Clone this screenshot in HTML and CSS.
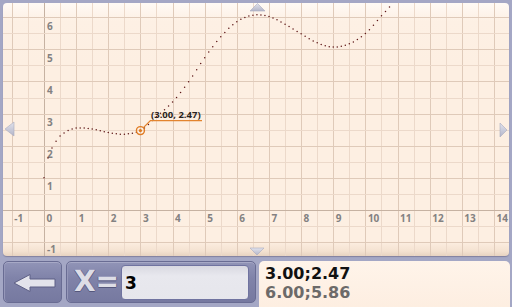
FILE: index.html
```html
<!DOCTYPE html>
<html lang="en">
  <head>
    <meta charset="UTF-8" />
    <meta name="viewport" content="width=device-width, initial-scale=1" />
    <title>Graph</title>
    <link rel="stylesheet" href="styles.css">
  </head>
  <body>
    <div class="screen">
      <!-- ===== GRAPH ===== -->
      <div class="graph">
        <svg id="plot" viewBox="3 3 506 253" width="506" height="253">
          <defs>
            <linearGradient id="navFill" x1="0" y1="0" x2="0" y2="1">
              <stop offset="0" stop-color="#e2e3ec"/>
              <stop offset="1" stop-color="#b3b5c9"/>
            </linearGradient>
          </defs>
          <g id="grid"></g>
          <g id="labels"></g>
          <g id="curve"></g>
          <g id="trace"></g>
          <!-- pan arrows -->
          <g class="nav">
            <polygon points="250,11 257.5,3.5 265,11"/>
            <polygon points="250,248 264,248 257,255"/>
            <polygon points="14,122 14,136 5,129"/>
            <polygon points="500,123 500,137 507,130"/>
          </g>
        </svg>
      </div>

      <!-- ===== INPUT BAR ===== -->
      <div class="bar">
        <button class="back-btn" aria-label="back">
          <svg viewBox="0 0 59 42"><path d="M10 21 L26 12.5 V17 H51 V25 H26 V29.5 Z"/></svg>
        </button>
        <div class="entry">
          <span class="x-label">X=</span>
          <div class="x-input">3</div>
        </div>
        <div class="results">
          <div class="res res-cur">3.00;2.47</div>
          <div class="res res-prev">6.00;5.86</div>
        </div>
      </div>
    </div>

    <script src="plot.js"></script>
  </body>
</html>
```

FILE: styles.css
```css
:root{
  --c-bg:#a4a7c5;
  --c-paper:#fdefe2;
  --c-btn:#8083a9;
  --c-btn-edge:#696c93;
  --c-label:#838181;
}
*,*::before,*::after{box-sizing:border-box;margin:0;padding:0}
html,body{width:512px;height:307px;overflow:hidden;background:var(--c-bg);font-family:"DejaVu Sans",sans-serif}

.screen{display:flex;flex-direction:column;height:307px;padding:3px 0 0 3px}

/* ===== GRAPH ===== */
.graph{width:506px;height:253px;border-radius:4px;overflow:hidden;
  background:linear-gradient(to bottom,#fffaf5 0,#fdf0e4 18px,var(--c-paper) 60px,var(--c-paper) 238px,#f4e2d1 248px,#e7d3c1 253px);
  box-shadow:0 1px 1px rgba(70,60,90,.35)}
#plot{display:block}
#plot .minor{stroke:#ecd9ca;stroke-width:1}
#plot .major{stroke:#dfcab9;stroke-width:1}
#plot .axis{stroke:#c6b2a2;stroke-width:1}
#plot .lbl{font-family:"Open Sans",sans-serif;font-weight:700;font-size:10px;fill:var(--c-label)}
#plot .dot{fill:#5e1717}
#plot .ring{fill:none;stroke:#e07b22;stroke-width:1.4}
#plot .ring-dot{fill:#e07b22}
#plot .lead{fill:none;stroke:#e3842f;stroke-width:1.3}
#plot .tip{font-family:"Open Sans",sans-serif;font-weight:700;font-size:9.5px;fill:#2a2420}
#plot .nav polygon{fill:url(#navFill);stroke:#a9abbf;stroke-width:.6}

/* ===== INPUT BAR ===== */
.bar{display:flex;align-items:flex-start;gap:4px;margin-top:5px;height:46px}

.back-btn{width:59px;height:42px;flex:none;border:1px solid var(--c-btn-edge);border-radius:5px;
  background:linear-gradient(to bottom,#9194b7,var(--c-btn) 40%,#7679a0);
  box-shadow:inset 0 1px 0 #a7a9c6,inset 1px 0 0 #9597b9;display:grid;place-items:center;cursor:pointer}
.back-btn svg{width:59px;height:42px;display:block}
.back-btn path{fill:#e3e3eb;stroke:#5d5f85;stroke-width:1}

.entry{width:190px;height:42px;flex:none;display:flex;align-items:center;padding:0 6px 0 7px;
  border:1px solid var(--c-btn-edge);border-radius:5px;
  background:linear-gradient(to bottom,#9194b7,var(--c-btn) 40%,#7679a0);
  box-shadow:inset 0 1px 0 #a7a9c6,inset 1px 0 0 #9597b9}
.x-label{width:47px;font-size:28px;font-weight:bold;line-height:1;color:#dddde6;
  text-shadow:0 1px 0 #55577c,1px 0 0 #6a6c92,-1px 0 0 #6a6c92,0 -1px 0 #9a9cbc}
.x-input{flex:1;height:35px;display:flex;align-items:center;padding:2px 0 0 3px;
  background:linear-gradient(to bottom,#d9d9e1,#e8e8ee 30%,#e6e6ec);border:1px solid #7073a0;border-radius:4px;
  font-size:17px;font-weight:bold;color:#000}

.results{flex:none;width:251px;height:46px;margin-left:-1px;padding:3px 0 0 6px;
  background:linear-gradient(to bottom,#fff4ea,#fdeee1);border-radius:5px 5px 0 0}
.res{font-size:16px;font-weight:bold;line-height:19px}
.res-cur{color:#111}
.res-prev{color:#6c6a69}
```

FILE: plot.js
```js
// graph geometry (page px)
const U = 32.14, OX = 44, OY = 210;
const px = x => OX + x * U;
const py = y => OY - y * U;
const NS = 'http://www.w3.org/2000/svg';

function el(tag, attrs, parent, text) {
  const e = document.createElementNS(NS, tag);
  for (const k in attrs) e.setAttribute(k, attrs[k]);
  if (text !== undefined) e.textContent = text;
  parent.appendChild(e);
  return e;
}

// sampled function, cubic hermite between samples
const xs = [0, .125, .25, .375, .5, .75, 1, 1.5, 2, 2.5, 3, 3.5, 4, 4.5, 5, 5.5, 6, 6.5, 7, 7.5, 8, 8.5, 9, 9.5, 10, 10.5, 11];
const ys = [1.0, 1.62, 1.93, 2.14, 2.3, 2.47, 2.55, 2.52, 2.41, 2.36, 2.47, 2.9, 3.36, 3.99, 4.74, 5.39, 5.86, 6.06, 6.02, 5.78, 5.48, 5.2, 5.07, 5.17, 5.49, 6.04, 6.6];
function slope(i) {
  const a = Math.max(i - 1, 0), b = Math.min(i + 1, xs.length - 1);
  return (ys[b] - ys[a]) / (xs[b] - xs[a]);
}
function f(x) {
  let i = 0;
  while (i < xs.length - 2 && x > xs[i + 1]) i++;
  const h = xs[i + 1] - xs[i], t = (x - xs[i]) / h;
  const t2 = t * t, t3 = t2 * t;
  return (2 * t3 - 3 * t2 + 1) * ys[i] + (t3 - 2 * t2 + t) * h * slope(i) +
         (-2 * t3 + 3 * t2) * ys[i + 1] + (t3 - t2) * h * slope(i + 1);
}

// grid
const grid = document.getElementById('grid');
for (let k = -3; k <= 30; k++) {
  const x = Math.round(px(k / 2)) + .5;
  if (x < 3 || x > 509) continue;
  el('line', { x1: x, y1: 3, x2: x, y2: 256, class: k === 0 ? 'axis' : (k % 2 ? 'minor' : 'major') }, grid);
}
for (let k = -3; k <= 14; k++) {
  const y = Math.round(py(k / 2)) + .5;
  if (y < 3 || y > 256) continue;
  el('line', { x1: 3, y1: y, x2: 509, y2: y, class: k === 0 ? 'axis' : (k % 2 ? 'minor' : 'major') }, grid);
}

// axis labels
const labels = document.getElementById('labels');
for (let k = -1; k <= 14; k++) el('text', { x: px(k) + 2.5, y: OY + 12.4, class: 'lbl' }, labels, String(k));
for (const k of [-1, 1, 2, 3, 4, 5, 6]) {
  el('text', { x: OX + 3, y: Math.min(py(k) + 12.6, 252.8), class: 'lbl' }, labels, String(k));
}

// dotted curve, one dot every 1/8 unit
const curve = document.getElementById('curve');
for (let i = 0; i / 8 <= 11; i++) {
  const x = i / 8, y = py(f(x));
  if (y < 4) break;
  el('circle', { cx: px(x).toFixed(2), cy: y.toFixed(2), r: .75, class: 'dot' }, curve);
}

// traced point
const trace = document.getElementById('trace');
const mx = px(3), my = py(2.47);
el('polyline', { points: `${mx + 3},${my - 3} ${mx + 10},${my - 10} 202,${my - 10}`, class: 'lead' }, trace);
el('circle', { cx: mx, cy: my, r: 4, class: 'ring' }, trace);
el('circle', { cx: mx, cy: my, r: 1.6, class: 'ring-dot' }, trace);
el('text', { x: 151, y: 118, class: 'tip' }, trace, '(3.00, 2.47)');
```
